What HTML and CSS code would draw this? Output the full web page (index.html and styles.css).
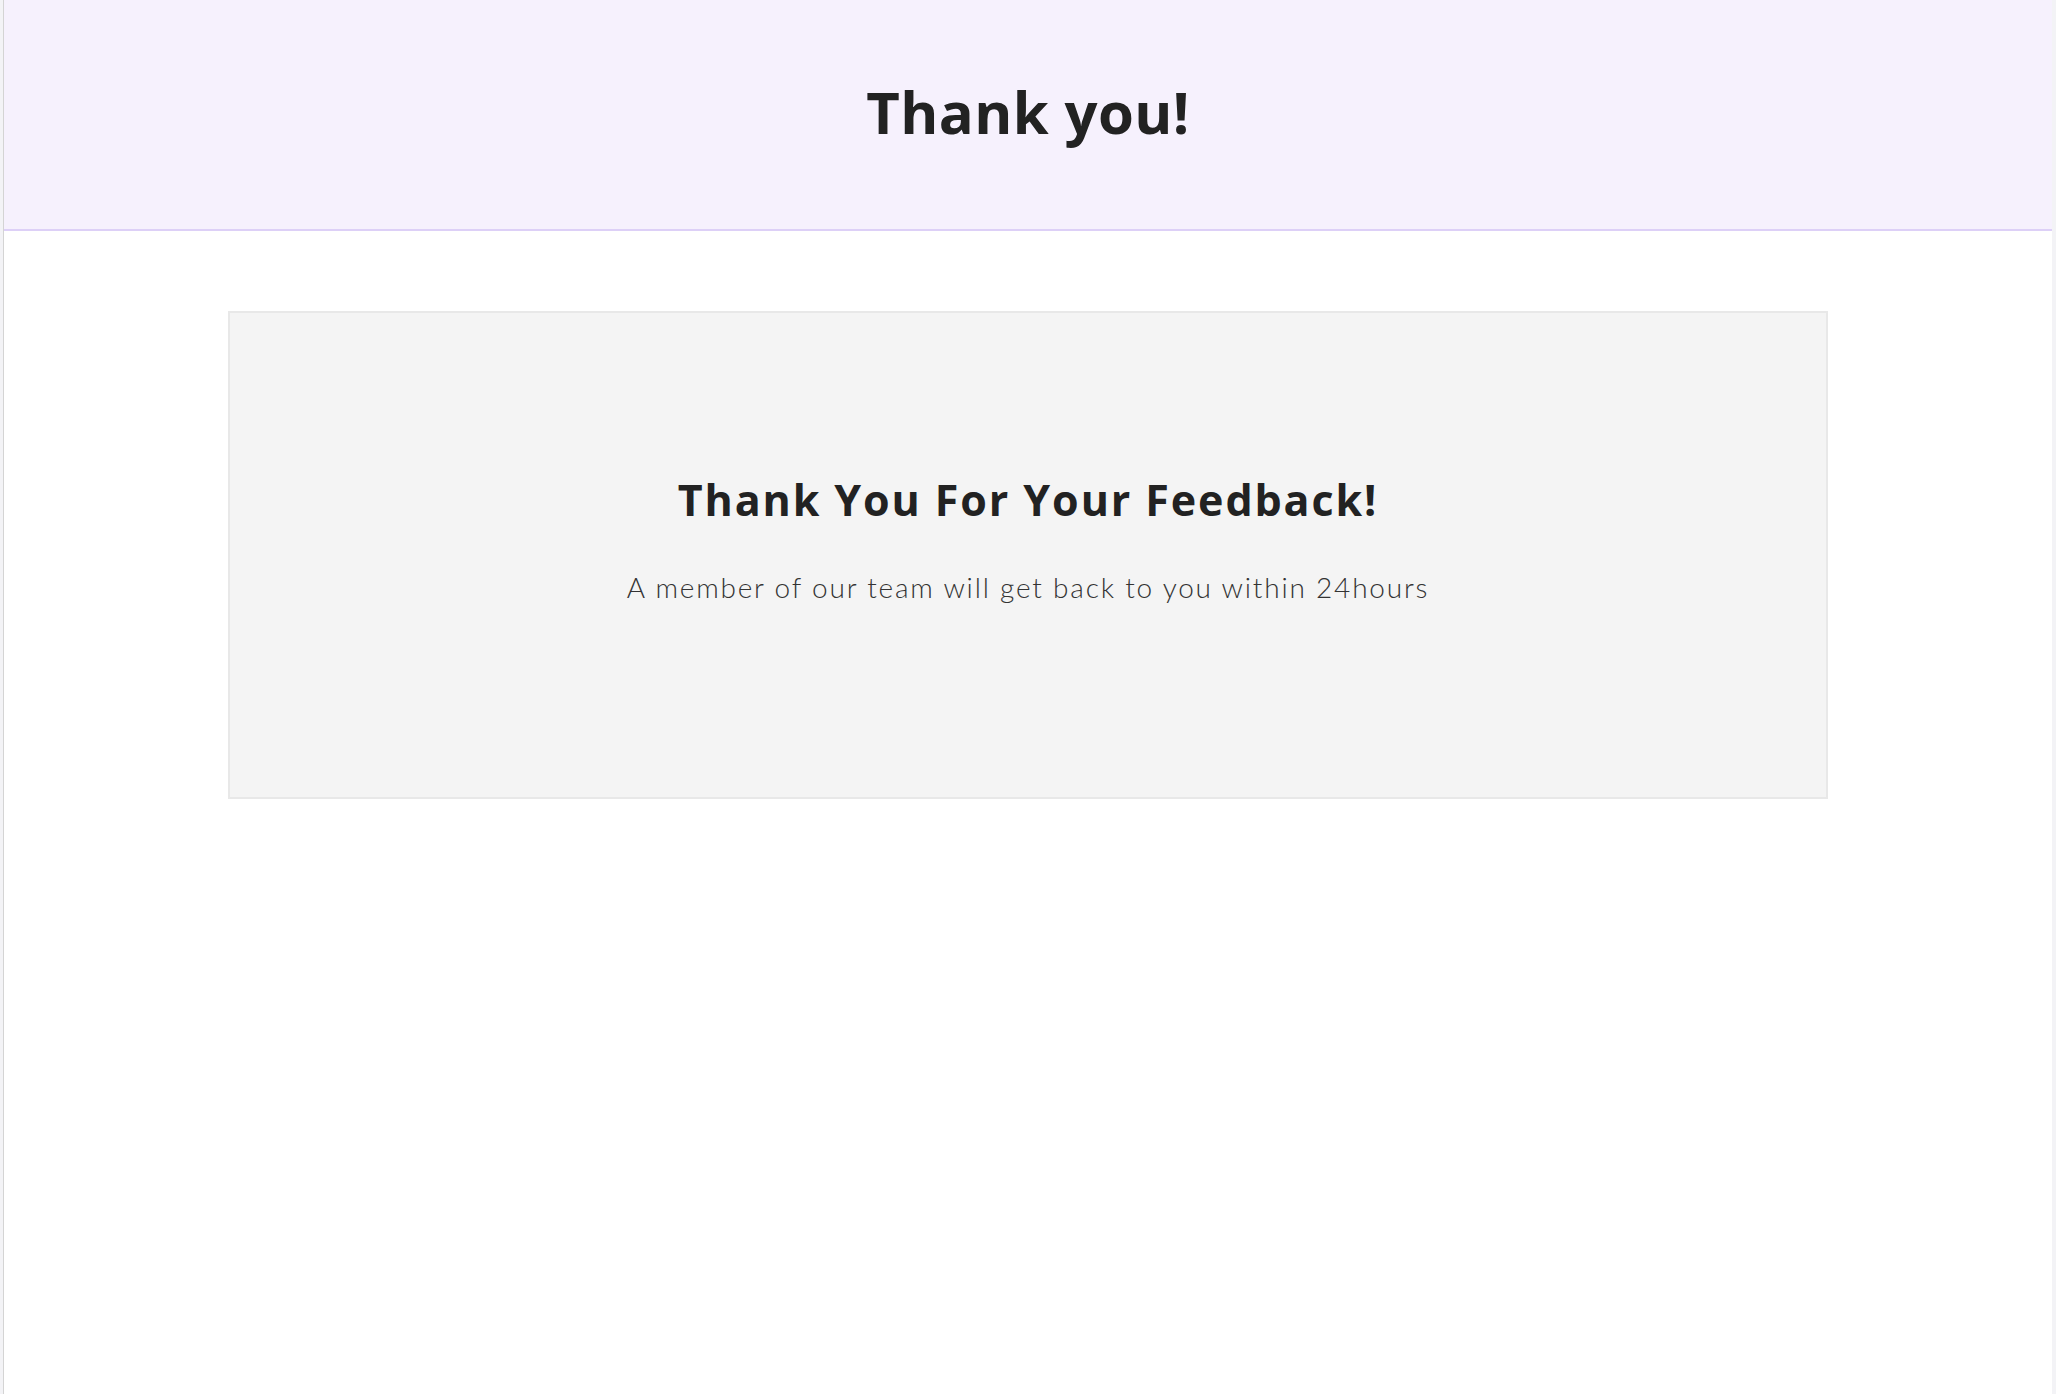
FILE: index.html
```html
<!DOCTYPE html>
<html lang="en">
<head>
<meta charset="utf-8">
<title>Thank you!</title>
<link rel="stylesheet" href="styles.css">
</head>
<body>
<div class="frame">
  <header class="hero">
    <h1 class="hero-title">Thank you!</h1>
  </header>
  <main class="content">
    <section class="card">
      <h2 class="card-title">Thank You For Your Feedback!</h2>
      <p class="card-text">A member of our team will get back to you within 24hours</p>
    </section>
  </main>
</div>
</body>
</html>
```
FILE: styles.css
```css
html, body {
  margin: 0;
  padding: 0;
  height: 100%;
}
body {
  background: #f3f3f6;
  padding: 0 4px 0 3px;
  box-sizing: border-box;
}
.frame {
  background: #ffffff;
  border-left: 1px solid #d4d4d4;
  min-height: 100%;
  box-sizing: border-box;
}
.hero {
  background: #f6f1fd;
  border-bottom: 2px solid #ddd0f7;
  height: 229px;
  display: flex;
  align-items: center;
  justify-content: center;
}
.hero-title {
  margin: 0;
  font-family: "Open Sans", sans-serif;
  font-weight: 700;
  font-size: 58px;
  letter-spacing: 0.4px;
  line-height: normal;
  color: #222222;
  padding-bottom: 7px;
}
.content {
  padding: 80px 0 0;
  display: flex;
  justify-content: center;
}
.card {
  width: 1600px;
  height: 488px;
  box-sizing: border-box;
  background: #f4f4f4;
  border: 2px solid #e8e8e8;
  display: flex;
  flex-direction: column;
  align-items: center;
  padding-top: 157px;
}
.card-title {
  margin: 0;
  font-family: "Open Sans", sans-serif;
  font-weight: 700;
  font-size: 43px;
  letter-spacing: 1.9px;
  line-height: normal;
  color: #222222;
}
.card-text {
  margin: 41px 0 0;
  font-family: "Lato", "Open Sans", sans-serif;
  font-weight: 300;
  font-size: 28px;
  letter-spacing: 1.8px;
  line-height: normal;
  color: #333333;
}
```
